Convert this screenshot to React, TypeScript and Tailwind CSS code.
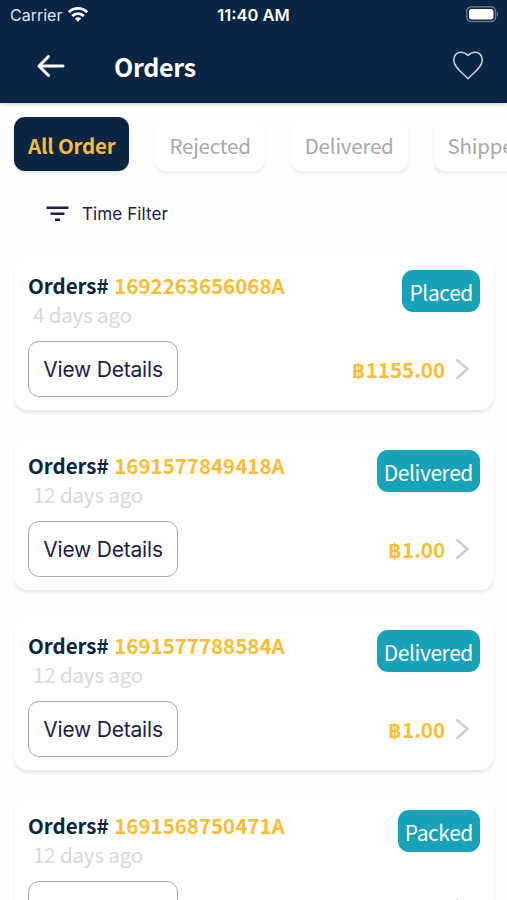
import { useState } from "react";

interface Order {
    id: string;
    age: string;
    status: string;
    total: string;
}

const tabs = ["All Order", "Rejected", "Delivered", "Shipped"];

const orders: Order[] = [
    { id: "1692263656068A", age: "4 days ago", status: "Placed", total: "1155.00" },
    { id: "1691577849418A", age: "12 days ago", status: "Delivered", total: "1.00" },
    { id: "1691577788584A", age: "12 days ago", status: "Delivered", total: "1.00" },
    { id: "1691568750471A", age: "12 days ago", status: "Packed", total: "1.00" },
];

function StatusBar() {
    return (
        <div className="grid h-[30px] grid-cols-3 items-center pl-[10px] pr-[8px] font-['Inter',sans-serif] text-white">
            <div className="flex items-center gap-[6px]">
                <span className="text-[16px] leading-[30px] text-[#dfe6ef]">Carrier</span>
                <svg className="-mt-[2px]" width="20" height="15" viewBox="0 0 20 15" fill="none" stroke="white" strokeWidth="2.7">
                    <path d="M.8 5.200C6 .2 14 .2 19.200 5.200" />
                    <path d="M4.200 9c3.200-3.300 8.400-3.300 11.600 0" />
                    <path d="M6.900 11.500c1.800-1.700 4.400-1.700 6.200 0L10 14.800z" fill="white" stroke="none" />
                </svg>
            </div>
            <span className="-ml-[2px] whitespace-nowrap text-center text-[16.500px] font-semibold leading-[30px]">11:40 AM</span>
            <svg className="-mt-[2px] justify-self-end" width="33" height="17" viewBox="0 0 33 17" fill="none">
                <rect x=".8" y=".8" width="28.8" height="14.8" rx="4.5" stroke="#66748a" strokeWidth="1.5" />
                <rect x="3" y="3" width="24.5" height="10.5" rx="2.5" fill="white" />
                <path d="M31 6v4.500c1.600-.6 1.600-3.900 0-4.500z" fill="#66748a" />
            </svg>
        </div>
    );
}

function Header() {
    return (
        <header className="h-[103px] shrink-0 bg-[#0a2444] shadow-[0_1px_4px_rgba(10,20,60,0.25)]">
            <StatusBar />
            <div className="flex h-[72px] items-center pl-[36px] pr-[23px] text-white">
                <button type="button" aria-label="Back">
                    <svg width="30" height="24" viewBox="0 0 30 24" fill="none" stroke="white" strokeWidth="3" strokeLinecap="round" strokeLinejoin="round">
                        <path d="M27 12H3M12.500 2.500 3 12l9.500 9.500" />
                    </svg>
                </button>
                <h1 className="ml-[48px] flex-1 text-[25px] font-bold leading-[36px] tracking-[-0.3px]">Orders</h1>
                <button type="button" aria-label="Favourites">
                    <svg width="32" height="30" viewBox="0 0 32 30" fill="none" stroke="#c3ccd8" strokeWidth="1.6" strokeLinejoin="round">
                        <path d="M16 4.500C13.800 1.900 11.500 1.200 9 1.200 4.700 1.200 1.700 4.500 1.700 9c0 7.500 9 13 14.300 18.700C21.300 22 30.300 16.500 30.300 9c0-4.500-3-7.800-7.300-7.800-2.500 0-4.800.7-7 3.300z" />
                    </svg>
                </button>
            </div>
        </header>
    );
}

function OrderCard({ order }: { order: Order }) {
    return (
        <article className="h-[155px] rounded-[14px] bg-white px-[14px] pt-[15px] shadow-[0_3px_3px_rgba(0,0,0,0.08)]">
            <div className="flex h-[71px] items-start justify-between">
                <div className="-mt-px">
                    <h2 className="whitespace-nowrap text-[20.500px] font-bold leading-[32px] text-[#0a2444]">
                        Orders# <span className="ml-px text-[#f8bd32]">{order.id}</span>
                    </h2>
                    <p className="pl-[5px] text-[20.500px] leading-[26px] tracking-[-0.15px] text-[#d8d8d8]">{order.age}</p>
                </div>
                <span className="h-[42px] rounded-[11px] bg-[#16a2b8] px-[7px] text-[21px] leading-[45px] tracking-[-0.400px] text-white">{order.status}</span>
            </div>
            <div className="flex items-center justify-between">
                <button type="button" className="h-[56px] w-[150px] rounded-[11px] border-[1.5px] border-[#aaaaaa] pt-px font-['Inter',sans-serif] text-[21px] tracking-[-0.2px] text-[#1b2048]">
                    View Details
                </button>
                <div className="flex items-center pr-[10px]">
                    <span className="flex items-baseline text-[20.500px] font-bold leading-[30px] text-[#f8bd32]">
                        <span className="mr-px font-['Inter',sans-serif] text-[19px] leading-[20px]">฿</span>
                        <span>{order.total}</span>
                    </span>
                    <svg className="ml-[10px]" width="15" height="22" viewBox="0 0 15 22" fill="none" stroke="#cdcdcd" strokeWidth="2.4">
                        <path d="M1.500 1.500 12.500 11l-11 9.500" />
                    </svg>
                </div>
            </div>
        </article>
    );
}

export default function App() {
    const [active, setActive] = useState("All Order");

    return (
        <div className="flex h-[900px] w-[507px] flex-col overflow-hidden bg-[#fefefe] font-['Noto_Sans_CJK_SC',sans-serif]">
            <Header />
            <nav className="flex h-[81px] shrink-0 gap-[26px] pl-[14px] pt-[14px]">
                {tabs.map((tab) => (
                    <button
                        key={tab}
                        type="button"
                        onClick={() => setActive(tab)}
                        className={
                            tab === active
                                ? "h-[54px] shrink-0 rounded-[11px] bg-[#0a2444] px-[14px] text-[20.500px] font-bold leading-[56px] tracking-[-0.2px] text-[#f8bd32] shadow-[0_3px_3px_rgba(0,0,0,0.08)]"
                                : "h-[54px] shrink-0 rounded-[11px] bg-white px-[14px] text-[20.500px] leading-[56px] tracking-[-0.2px] text-[#a8a8a8] shadow-[0_3px_3px_rgba(0,0,0,0.08)]"
                        }
                    >
                        {tab}
                    </button>
                ))}
            </nav>
            <div className="flex h-[71px] shrink-0 items-start pl-[46px] pt-[15px]">
                <button type="button" className="flex items-center gap-[13px]">
                    <svg width="23" height="16" viewBox="0 0 23 16" fill="none" stroke="#1b2048" strokeWidth="2.4">
                        <path d="M.5 1.800h22M4.500 7.800h14M9 13.800h5" />
                    </svg>
                    <span className="font-['Inter',sans-serif] text-[17px] leading-[30px] tracking-[0.1px] text-[#1b2048]">Time Filter</span>
                </button>
            </div>
            <main className="flex flex-col gap-[25px] pl-[14px] pr-[13px] [&>*]:shrink-0">
                {orders.map((order) => (
                    <OrderCard key={order.id} order={order} />
                ))}
            </main>
        </div>
    );
}
